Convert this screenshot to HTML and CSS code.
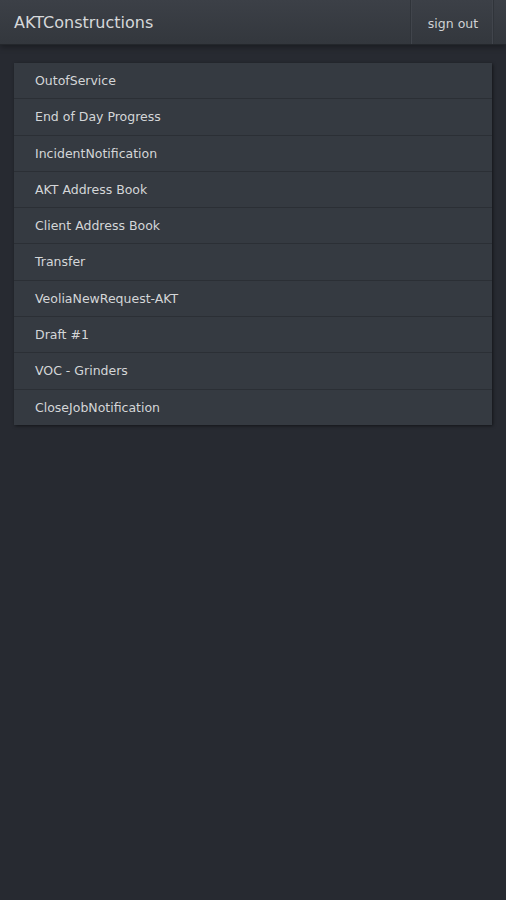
FILE: index.html
```html
<!DOCTYPE html>
<html>
<head>
<meta charset="utf-8">
<link rel="stylesheet" href="styles.css">
</head>
<body>
<header class="bar">
  <h1 class="title">AKTConstructions</h1>
  <button class="signout">sign out</button>
</header>
<main class="content">
  <ul class="list">
    <li class="item">OutofService</li>
    <li class="item">End of Day Progress</li>
    <li class="item">IncidentNotification</li>
    <li class="item">AKT Address Book</li>
    <li class="item">Client Address Book</li>
    <li class="item">Transfer</li>
    <li class="item">VeoliaNewRequest-AKT</li>
    <li class="item">Draft #1</li>
    <li class="item">VOC - Grinders</li>
    <li class="item">CloseJobNotification</li>
  </ul>
</main>
</body>
</html>
```
FILE: styles.css
```css
html, body {
  margin: 0;
  padding: 0;
  height: 100%;
  background: #272a31;
  font-family: "DejaVu Sans", sans-serif;
}
.bar {
  height: 45px;
  box-sizing: border-box;
  display: flex;
  align-items: stretch;
  justify-content: space-between;
  background: linear-gradient(#3c4047, #33373d);
  border-bottom: 1px solid #24272c;
  box-shadow: 0 2px 6px rgba(0,0,0,0.35);
}
.title {
  margin: 0;
  padding-left: 14px;
  padding-top: 1px;
  font-size: 16px;
  font-weight: normal;
  color: #d6d8da;
  line-height: 43px;
}
.signout {
  margin-right: 12px;
  width: 84px;
  background: transparent;
  border: none;
  border-left: 1px solid #30343a;
  border-right: 1px solid #30343a;
  box-shadow: inset 1px 0 0 #41454c, inset -1px 0 0 #41454c;
  color: #d0d2d4;
  font-family: "DejaVu Sans", sans-serif;
  font-size: 12.5px;
  padding: 3px 0 0 2px;
}
.content {
  padding: 18px 14px;
}
.list {
  list-style: none;
  margin: 0;
  padding: 0;
  box-shadow: 1px 1px 3px rgba(0,0,0,0.5);
}
.item {
  height: 35.3px;
  box-sizing: content-box;
  line-height: 35.3px;
  padding-left: 21px;
  background: #353a41;
  border-bottom: 1px solid #2b2f35;
  color: #d4d6d8;
  font-size: 12.5px;
}
.item:last-child {
  border-bottom: none;
}
```
